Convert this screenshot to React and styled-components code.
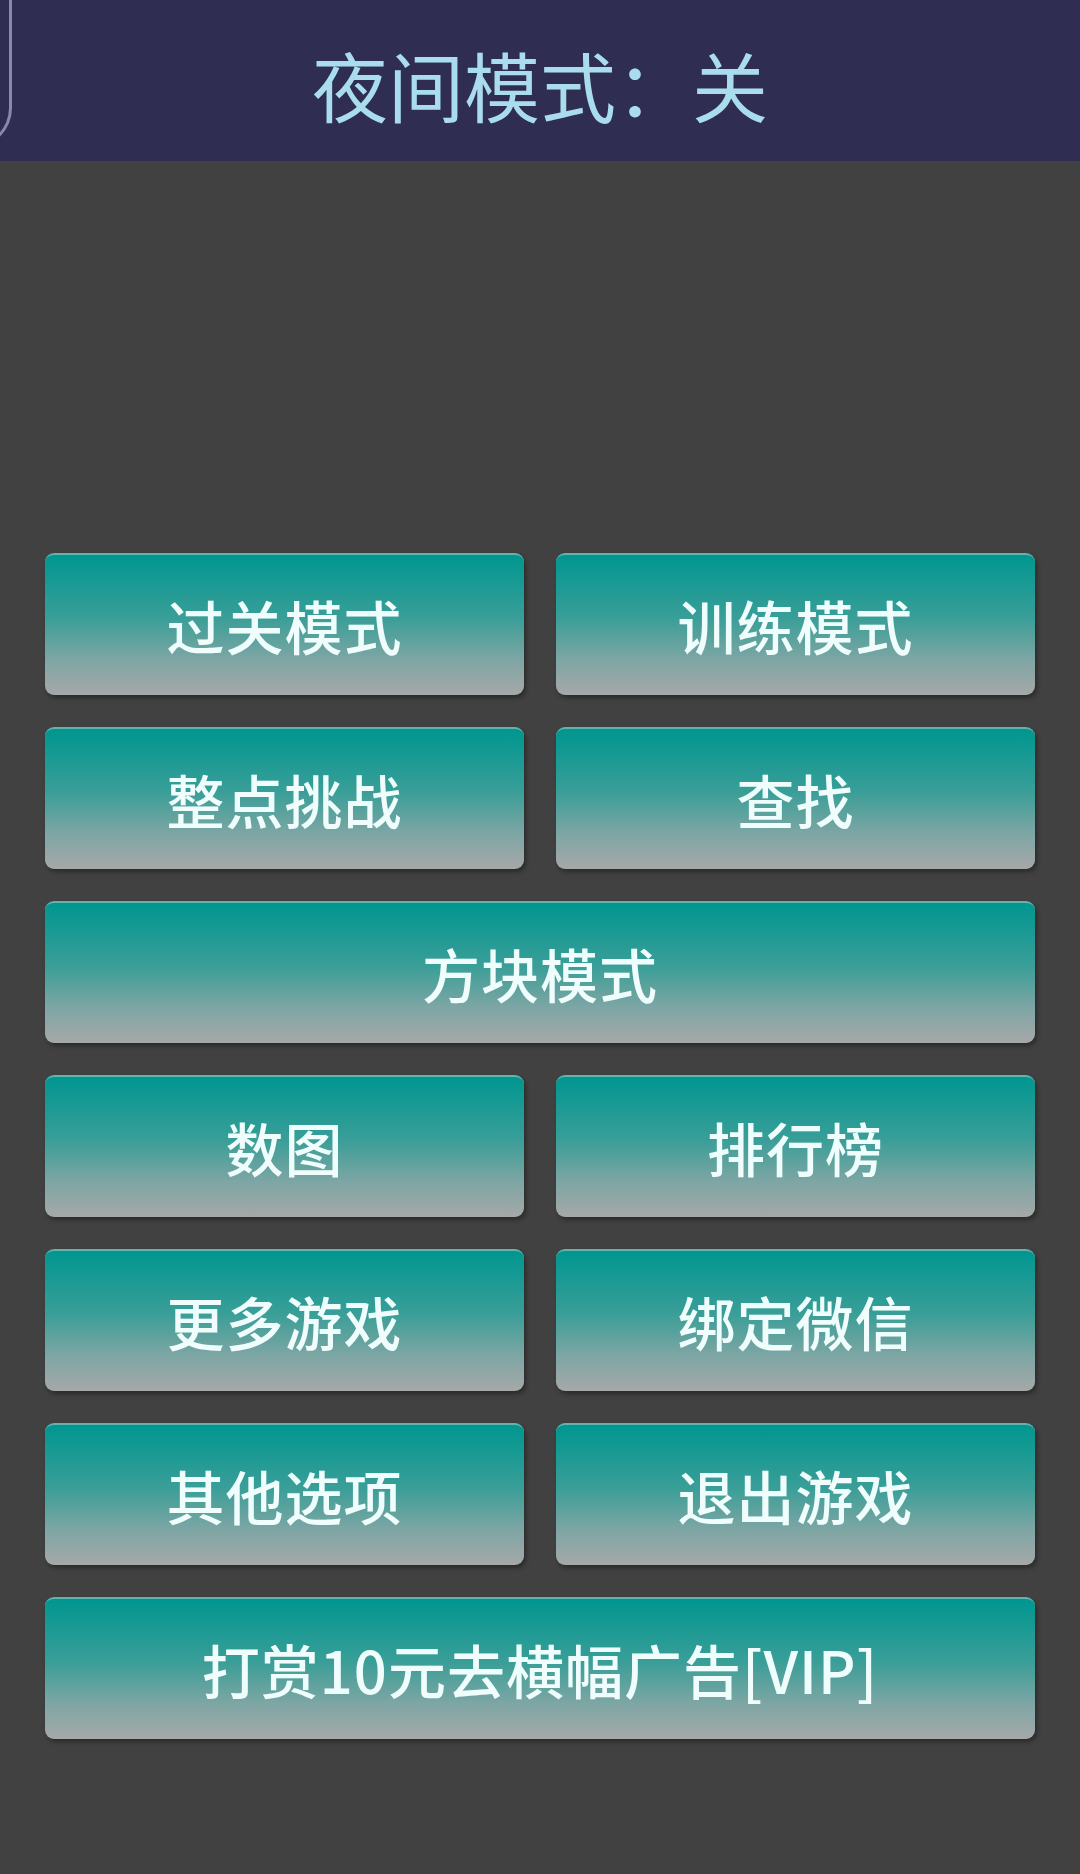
import React from "react";
import styled, { createGlobalStyle } from "styled-components";

const GlobalStyle = createGlobalStyle`
  html, body {
    margin: 0;
    padding: 0;
    background: #414141;
  }
  body {
    font-family: "Noto Sans CJK SC", "Noto Sans", sans-serif;
  }
`;

const Page = styled.div`
  width: 1080px;
  min-height: 1874px;
  background: #414141;
`;

const Header = styled.header`
  position: relative;
  height: 161px;
  background: #2f2d51;
  display: flex;
  align-items: center;
  justify-content: center;
`;

const BackEdge = styled.div`
  position: absolute;
  left: -40px;
  top: -20px;
  width: 52px;
  height: 168px;
  border: 3px solid #8a88b0;
  border-left: none;
  border-radius: 0 0 40px 0;
  box-sizing: border-box;
`;

const Title = styled.h1`
  margin: 0;
  font-size: 76px;
  font-weight: 400;
  color: #a9dcec;
  line-height: 1;
  padding-top: 6px;
`;

const Menu = styled.div`
  display: grid;
  grid-template-columns: 1fr 1fr;
  grid-auto-rows: 142px;
  gap: 32px;
  padding: 0 45px;
  margin-top: 392px;
`;

const MenuButton = styled.button`
  grid-column: ${(p) => (p.$wide ? "1 / span 2" : "auto")};
  border: none;
  border-top: 2px solid #5fb4ae;
  border-radius: 9px;
  background: linear-gradient(180deg, #009690 0%, #3a9e98 45%, #7ea6a4 75%, #a6a8a8 100%);
  box-shadow: 2px 3px 4px rgba(0, 0, 0, 0.35);
  color: #effdfc;
  font-family: "Noto Sans CJK SC", "Noto Sans", sans-serif;
  font-size: 58px;
  font-weight: 500;
  letter-spacing: 1px;
  display: flex;
  align-items: center;
  justify-content: center;
  padding: 0;
  cursor: pointer;
`;

const items = [
  { label: "过关模式" },
  { label: "训练模式" },
  { label: "整点挑战" },
  { label: "查找" },
  { label: "方块模式", wide: true },
  { label: "数图" },
  { label: "排行榜" },
  { label: "更多游戏" },
  { label: "绑定微信" },
  { label: "其他选项" },
  { label: "退出游戏" },
  { label: "打赏10元去横幅广告[VIP]", wide: true },
];

export default function App() {
  return (
    <Page>
      <GlobalStyle />
      <Header>
        <BackEdge />
        <Title>夜间模式：关</Title>
      </Header>
      <Menu>
        {items.map((it) => (
          <MenuButton key={it.label} $wide={it.wide}>
            {it.label}
          </MenuButton>
        ))}
      </Menu>
    </Page>
  );
}
